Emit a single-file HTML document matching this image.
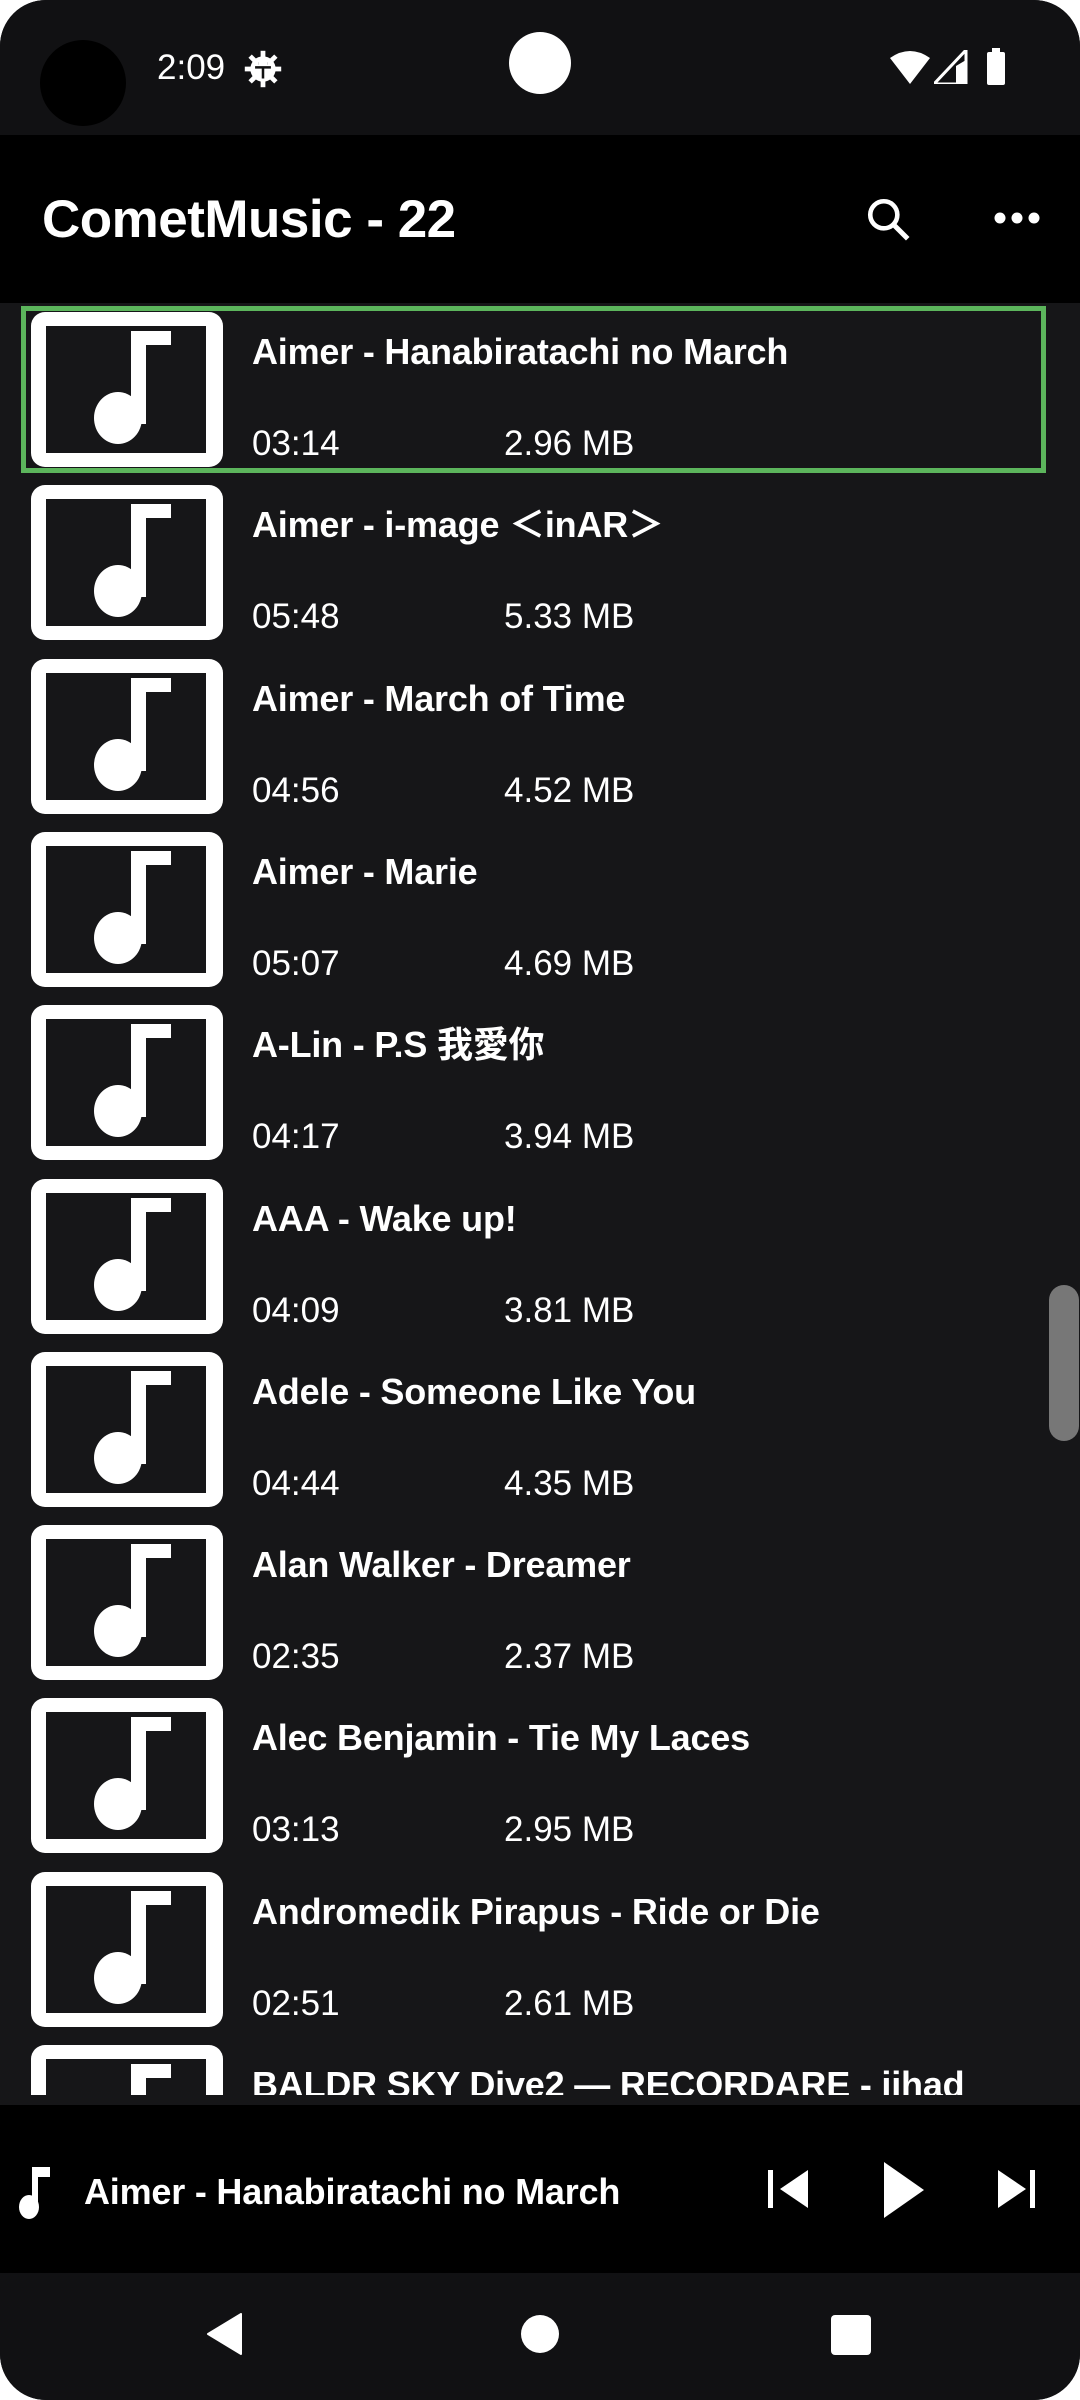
<!DOCTYPE html>
<html><head><meta charset="utf-8">
<style>
*{margin:0;padding:0;box-sizing:border-box}
html,body{width:1080px;height:2400px;background:#fff;overflow:hidden}
body{font-family:"Liberation Sans","Noto Sans CJK SC",sans-serif;color:#fff}
.screen{position:absolute;left:0;top:0;width:1080px;height:2400px;border-radius:46px;overflow:hidden;background:#161618}
.status{position:absolute;left:0;top:0;width:1080px;height:135px;background:#111113}
.appbar{position:absolute;left:0;top:135px;width:1080px;height:168px;background:#000}
.list{position:absolute;left:0;top:303px;width:1080px;height:1792px;overflow:hidden;background:#161618}
.row{position:absolute;left:0;width:1080px;height:173px}
.thumb{position:absolute;left:31px;width:192px;height:155px;background:#fff;border-radius:14px}
.thumb .in{position:absolute;left:15px;top:14px;width:160px;height:127px;background:#161618}
.t{position:absolute;left:252px;font-weight:bold;font-size:36px;letter-spacing:-0.2px;white-space:nowrap;line-height:40px}
.d{position:absolute;font-size:35px;line-height:40px;white-space:nowrap}
.sel{position:absolute;left:21px;top:306px;width:1025px;height:167px;border:5px solid #5cb55c}
</style></head><body>
<div class="screen">
<div class="status">
  <div style="position:absolute;left:40px;top:40px;width:86px;height:86px;border-radius:50%;background:#000"></div>
  <div style="position:absolute;left:157px;top:48px;font-size:35px;line-height:40px">2:09</div>
  <svg style="position:absolute;left:244px;top:50px" width="38" height="38" viewBox="0 0 24 24"><g fill="#fff"><circle cx="12" cy="12" r="8"/><rect x="10.5" y="0.5" width="3" height="4"/><rect x="10.5" y="19.5" width="3" height="4"/><rect x="0.5" y="10.5" width="4" height="3"/><rect x="19.5" y="10.5" width="4" height="3"/><rect x="10.5" y="0.5" width="3" height="4" transform="rotate(45 12 12)"/><rect x="10.5" y="0.5" width="3" height="4" transform="rotate(-45 12 12)"/><rect x="10.5" y="19.5" width="3" height="4" transform="rotate(45 12 12)"/><rect x="10.5" y="19.5" width="3" height="4" transform="rotate(-45 12 12)"/></g><path d="M7 11h10M12 11v7M9 8.5h.1M15 8.5h.1" stroke="#111" stroke-width="1.6"/></svg>
  <div style="position:absolute;left:509px;top:32px;width:62px;height:62px;border-radius:50%;background:#fff"></div>
  <svg style="position:absolute;left:890px;top:50px" width="40" height="34" viewBox="0 0 40 34"><path d="M0 8 Q20 -6 40 8 L20 34 Z" fill="#fff"/></svg>
  <svg style="position:absolute;left:934px;top:50px" width="34" height="34" viewBox="0 0 34 34"><path d="M32 0 V34 H0 Z" fill="none" stroke="#fff" stroke-width="3"/><path d="M32 10 V34 H22 V16 Z" fill="#fff"/></svg>
  <div style="position:absolute;left:987px;top:52px;width:18px;height:33px;background:#fff;border-radius:2px"></div>
  <div style="position:absolute;left:992px;top:48px;width:8px;height:5px;background:#fff"></div>
</div>
<div class="appbar">
  <div style="position:absolute;left:42px;top:55px;font-size:53px;font-weight:bold;line-height:60px;letter-spacing:-0.5px">CometMusic - 22</div>
  <svg style="position:absolute;left:864px;top:60px" width="50" height="50" viewBox="0 0 24 24"><circle cx="9.5" cy="9.5" r="6.5" fill="none" stroke="#fff" stroke-width="2.2"/><path d="M14.5 14.5 L21 21" stroke="#fff" stroke-width="2.4"/></svg>
  <svg style="position:absolute;left:994px;top:76px" width="46" height="14" viewBox="0 0 46 14"><circle cx="6" cy="7" r="5.5" fill="#fff"/><circle cx="23" cy="7" r="5.5" fill="#fff"/><circle cx="40" cy="7" r="5.5" fill="#fff"/></svg>
</div>

<div class="list" id="list"></div>
<div class="sel"></div>
<div style="position:absolute;left:1049px;top:1285px;width:30px;height:156px;border-radius:15px;background:#777"></div>

<div style="position:absolute;left:0;top:2105px;width:1080px;height:168px;background:#000">
  <svg style="position:absolute;left:14px;top:58px" width="38" height="56" viewBox="0 0 38 56"><path d="M18 4 H36 V14 H24 V44 H18 Z" fill="#fff"/><ellipse cx="15" cy="44" rx="10" ry="12" fill="#fff"/></svg>
  <div style="position:absolute;left:84px;top:67px;font-size:36px;font-weight:bold;line-height:40px;letter-spacing:-0.2px;white-space:nowrap">Aimer - Hanabiratachi no March</div>
  <svg style="position:absolute;left:766px;top:63px" width="44" height="42" viewBox="0 0 44 42"><rect x="2" y="2" width="5" height="38" fill="#fff"/><path d="M42 2 V40 L14 21 Z" fill="#fff"/></svg>
  <svg style="position:absolute;left:882px;top:57px" width="44" height="56" viewBox="0 0 44 56"><path d="M2 0 V56 L42 28 Z" fill="#fff"/></svg>
  <svg style="position:absolute;left:996px;top:63px" width="44" height="42" viewBox="0 0 44 42"><path d="M2 2 V40 L30 21 Z" fill="#fff"/><rect x="34" y="2" width="5" height="38" fill="#fff"/></svg>
</div>

<div style="position:absolute;left:0;top:2273px;width:1080px;height:127px;background:#111113">
  <svg style="position:absolute;left:205px;top:40px" width="40" height="42" viewBox="0 0 40 42"><path d="M36 1 V41 L3 21 Z" fill="#fff" stroke="#fff" stroke-width="2" stroke-linejoin="round"/></svg>
  <div style="position:absolute;left:521px;top:42px;width:38px;height:38px;border-radius:50%;background:#fff"></div>
  <div style="position:absolute;left:831px;top:42px;width:40px;height:40px;border-radius:4px;background:#fff"></div>
</div>
</div>

<script>
var rows=[["Aimer - Hanabiratachi no March","03:14","2.96 MB"],["Aimer - i-mage ＜inAR＞","05:48","5.33 MB"],["Aimer - March of Time","04:56","4.52 MB"],["Aimer - Marie","05:07","4.69 MB"],["A-Lin - P.S 我愛你","04:17","3.94 MB"],["AAA - Wake up!","04:09","3.81 MB"],["Adele - Someone Like You","04:44","4.35 MB"],["Alan Walker - Dreamer","02:35","2.37 MB"],["Alec Benjamin - Tie My Laces","03:13","2.95 MB"],["Andromedik Pirapus - Ride or Die","02:51","2.61 MB"],["BALDR SKY Dive2 — RECORDARE - iihad","",""]];
var note='<svg style="position:absolute;left:0;top:0" width="192" height="155" viewBox="0 0 192 155"><path d="M100 19 H140 V33 H115 V112 H100 Z" fill="#fff"/><ellipse cx="87" cy="106" rx="24" ry="26" fill="#fff"/></svg>';
var h='';
for(var k=0;k<rows.length;k++){
 var tt=312-303+173.3*k, dy=443-303+173.3*k;
 h+='<div class="thumb" style="top:'+tt+'px"><div class="in"></div>'+note+'</div>';
 h+='<div class="t" style="top:'+(dy-91-20)+'px">'+rows[k][0]+'</div>';
 if(rows[k][1]){h+='<div class="d" style="left:252px;top:'+(dy-19)+'px">'+rows[k][1]+'</div><div class="d" style="left:504px;top:'+(dy-19)+'px">'+rows[k][2]+'</div>';}
}
document.getElementById('list').innerHTML=h;
</script>
</body></html>
